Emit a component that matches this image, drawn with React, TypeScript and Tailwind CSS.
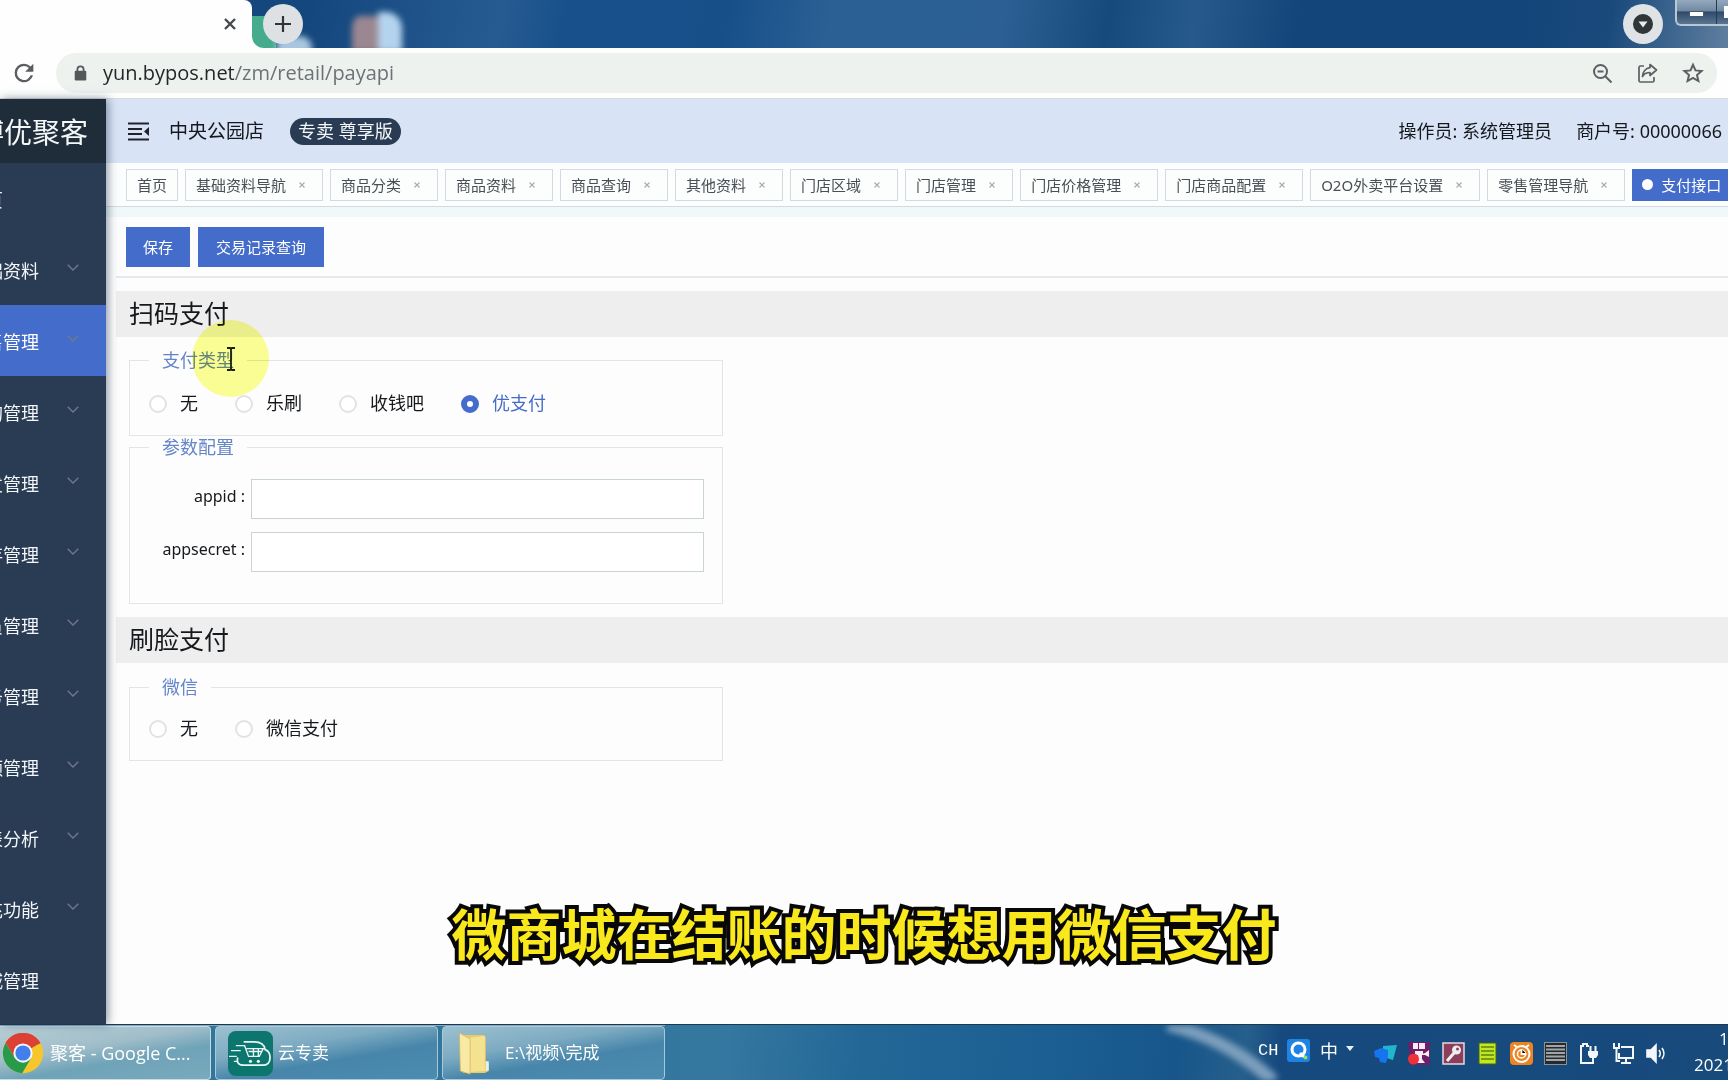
import type { ReactNode } from "react";

const menu = [
  { label: "页", open: false },
  { label: "础资料", open: true },
  { label: "售管理", open: true, active: true },
  { label: "购管理", open: true },
  { label: "发管理", open: true },
  { label: "存管理", open: true },
  { label: "员管理", open: true },
  { label: "务管理", open: true },
  { label: "额管理", open: true },
  { label: "表分析", open: true },
  { label: "充功能", open: true },
  { label: "城管理", open: false },
];

const tabs = [
  "基础资料导航",
  "商品分类",
  "商品资料",
  "商品查询",
  "其他资料",
  "门店区域",
  "门店管理",
  "门店价格管理",
  "门店商品配置",
  "O2O外卖平台设置",
  "零售管理导航",
];

function TabStrip() {
  return (
    <div className="flex h-12 items-start overflow-hidden bg-[linear-gradient(100deg,#14477d_0%,#14477d_18%,#265b91_29%,#17508a_33%,#175089_42%,#2a6094_48%,#2c6094_58%,#164a7c_64%,#27598c_69%,#14457a_75%,#14457a_88%,#1a4a7c_93%,#5f7f9f_100%)]">
      <div className="flex h-12 w-[252px] shrink-0 items-center justify-end rounded-tr-lg bg-[#fdfefd] pr-[14px]">
        <button aria-label="关闭标签页" className="flex size-4 items-center justify-center">
          <svg viewBox="0 0 14 14" className="size-[14px]" fill="none" stroke="#45494c" strokeWidth="2.4">
            <path d="M2 2l10 10M12 2L2 12" />
          </svg>
        </button>
      </div>
      <div className="relative h-12 w-14 shrink-0">
        <div className="absolute top-4 left-0 h-8 w-5 bg-[#fdfefd]" />
        <div className="absolute top-4 left-0 h-8 w-6 rounded-bl-xl bg-[#44ac8c]" />
        <div className="absolute -bottom-3 left-6 h-6 w-9 rounded-full bg-[#a9c6df] blur-[3px]" />
        <button
          aria-label="新标签页"
          className="absolute top-1 left-[11px] flex size-10 items-center justify-center rounded-full bg-[#dde1e3]"
        >
          <svg viewBox="0 0 16 16" className="size-4" fill="none" stroke="#303438" strokeWidth="2.2">
            <path d="M8 0v16M0 8h16" />
          </svg>
        </button>
      </div>
      <div className="mt-3 ml-11 flex h-10 w-[50px] shrink-0 overflow-hidden rounded-t-2xl blur-[3px]">
        <div className="mt-1 flex-1 bg-[#9b8791]" />
        <div className="w-6 bg-[#b4d3ee]" />
      </div>
      <div className="flex-1" />
      <button
        aria-label="搜索标签页"
        className="mt-1 mr-3 flex size-10 shrink-0 items-center justify-center rounded-full bg-[#dfe3e6]"
      >
        <svg viewBox="0 0 20 20" className="size-5">
          <circle cx="10" cy="10" r="10" fill="#303638" />
          <path d="M5.5 7.5h9L10 13.5z" fill="#e8ecee" />
        </svg>
      </button>
      <div className="flex h-[26px] w-[53px] shrink-0 rounded-bl-md border-b-2 border-l-2 border-[#b9c7d4] bg-[linear-gradient(#94a9be_0%,#7089a3_45%,#2e4a69_50%,#5b7692_100%)]">
        <button aria-label="最小化" className="flex w-10 items-center justify-center border-r border-[#243c57]">
          <span className="mt-1 h-[6px] w-[15px] border border-[#4b5a6a] bg-white" />
        </button>
        <button aria-label="最大化" className="flex flex-1 items-center justify-end overflow-hidden">
          <span className="h-3 w-1 bg-white" />
        </button>
      </div>
    </div>
  );
}

function AddressBar() {
  return (
    <div className="flex h-[51px] items-center border-b border-[#d8dadc] bg-[#fdfefd] pr-[11px]">
      <button aria-label="重新加载" className="flex w-14 shrink-0 justify-center pr-2">
        <svg viewBox="0 0 24 24" className="size-7" fill="#5a5e62">
          <path d="M17.65 6.35A7.96 7.96 0 0 0 12 4a8 8 0 1 0 7.73 10h-2.08A6 6 0 1 1 12 6c1.66 0 3.14.69 4.22 1.78L13 11h7V4z" />
        </svg>
      </button>
      <div className="flex h-10 flex-1 items-center rounded-full bg-[#eef2ef] pr-[13px] pl-[18px]">
        <svg viewBox="0 0 14 18" className="mr-4 h-4 w-[13px] shrink-0">
          <path d="M3.5 8V5a3.5 3.5 0 0 1 7 0v3" fill="none" stroke="#54585b" strokeWidth="2" />
          <rect x="0.5" y="6.5" width="13" height="11" rx="1.2" fill="#54585b" />
        </svg>
        <div className="font-['Open_Sans',sans-serif] text-[20px] leading-7 text-[#6d7276]">
          <span className="text-[#23272a]">yun.bypos.net</span>/zm/retail/payapi
        </div>
        <div className="flex-1" />
        <div className="flex items-center gap-6">
          <button aria-label="缩小">
            <svg viewBox="0 0 21 21" className="size-[21px]" fill="none" stroke="#5c6063" strokeWidth="2">
              <circle cx="8.5" cy="8.5" r="6.5" />
              <path d="M13.5 13.5l6 6M5.5 8.5h6" />
            </svg>
          </button>
          <button aria-label="分享">
            <svg viewBox="0 0 21 21" className="size-[21px]" fill="none" stroke="#5c6063" strokeWidth="1.7" strokeLinejoin="round">
              <path d="M7 3H3.5A1.5 1.5 0 0 0 2 4.500v13A1.500 1.500 0 0 0 3.500 19h12a1.500 1.500 0 0 0 1.500-1.500V14" />
              <path d="M13 1.500l6.500 5.500L13 12.500V9.500C9 9.500 7 11 5.500 13.500 5.800 9 8.500 5.200 13 4.600z" />
            </svg>
          </button>
          <button aria-label="收藏">
            <svg viewBox="0 0 22 22" className="size-[22px]" fill="none" stroke="#5c6063" strokeWidth="2">
              <path d="M11 2.800l2.500 5.600 6.100.6-4.600 4 1.400 6L11 15.800 5.600 19 7 13 2.400 9l6.100-.6z" />
            </svg>
          </button>
        </div>
      </div>
    </div>
  );
}

function Sidebar() {
  return (
    <aside className="relative z-10 w-[106px] shrink-0 bg-[#2a3b54] shadow-[2px_0_9px_rgba(30,50,80,0.5)]">
      <div className="flex h-16 w-full justify-end overflow-hidden bg-[#1f2d3a] pr-[18px] text-[28px] leading-[66px] whitespace-nowrap text-[#f3f7f8]">
        博优聚客
      </div>
      <nav>
        {menu.map((m) => (
          <a
            key={m.label}
            href="#"
            className={
              m.active
                ? "flex h-[71px] items-center bg-[#446ccb] text-white"
                : "flex h-[71px] items-center text-[#f2f6f8]"
            }
          >
            <span
              className={
                m.label.length === 1
                  ? "flex w-[3px] justify-end overflow-hidden pt-[2px] text-[18px] leading-6"
                  : "flex w-[39px] justify-end overflow-hidden pt-[2px] text-[18px] leading-6 whitespace-nowrap"
              }
            >
              {m.label}
            </span>
            {m.open && (
              <svg viewBox="0 0 12 7" className="mb-1 ml-7 h-[7px] w-3" fill="none" stroke="#6e7889" strokeWidth="1.4">
                <path d="M.7.700l5.300 5.200 5.300-5.200" />
              </svg>
            )}
          </a>
        ))}
      </nav>
    </aside>
  );
}

function Header() {
  return (
    <header className="flex h-16 items-center bg-[#d8e4f6] pr-[6px] pl-[22px] text-[18px] leading-6 whitespace-nowrap text-[#15181c]">
      <button aria-label="收起菜单">
        <svg viewBox="0 0 21 19" className="h-[19px] w-[21px]" fill="none" stroke="#20242a" strokeWidth="2">
          <path d="M0 1.500h21M0 7h14M0 12h14M0 17.500h21" />
          <path d="M21 5v9l-5-4.500z" fill="#20242a" stroke="none" />
        </svg>
      </button>
      <span className="ml-5 text-[19px]">中央公园店</span>
      <span className="ml-[26px] rounded-full bg-[#2a3b54] px-2 py-px text-[18px] leading-[25px] text-[#f5f8fa]">
        专卖 尊享版
      </span>
      <span className="flex-1" />
      <span>操作员: 系统管理员</span>
      <span className="ml-6">商户号: 00000066</span>
    </header>
  );
}

function PageTabs() {
  return (
    <div className="flex h-11 items-center gap-[7px] overflow-hidden border-b border-[#d5dae0] bg-[#fcfefd] pl-5 text-[15px] leading-5 whitespace-nowrap text-[#4a4e55]">
      <a href="#" className="flex h-8 shrink-0 items-center border border-[#d4dae0] px-[10px]">
        首页
      </a>
      {tabs.map((t) => (
        <div key={t} className="flex h-8 shrink-0 items-center border border-[#d4dae0] pl-[10px]">
          <a href="#">{t}</a>
          <button aria-label={`关闭${t}`} className="flex w-9 items-center justify-center pr-1">
            <svg viewBox="0 0 6 6" className="size-[6px]" fill="none" stroke="#a6abb0" strokeWidth="1.100">
              <path d="M.5.500l5 5M5.500.500l-5 5" />
            </svg>
          </button>
        </div>
      ))}
      <a href="#" className="flex h-8 shrink-0 items-center gap-2 bg-[#446ccb] px-[10px] text-white">
        <span className="size-[11px] rounded-full bg-white" />
        支付接口
      </a>
    </div>
  );
}

function Radio({ name, label, checked }: { name: string; label: string; checked?: boolean }) {
  return (
    <label className={checked ? "flex items-center gap-[13px] text-[#446ccb]" : "flex items-center gap-[13px]"}>
      <input
        type="radio"
        name={name}
        defaultChecked={checked}
        className="size-[18px] appearance-none rounded-full border-2 border-[#e0e3e5] bg-white checked:border-[6px] checked:border-[#446ccb]"
      />
      {label}
    </label>
  );
}

function Group({ title, children }: { title: string; children: ReactNode }) {
  return (
    <fieldset className="ml-[13px] w-[594px] max-w-full border border-[#e2e5e7] pl-[19px]">
      <legend className="px-[13px] text-[18px] leading-6 text-[#6485c8]">{title}</legend>
      {children}
    </fieldset>
  );
}

function SectionTitle({ children }: { children: ReactNode }) {
  return (
    <h2 className="h-[46px] bg-[#eeeeee] pl-[13px] text-[25px] leading-[44px] text-[#15181c]">{children}</h2>
  );
}

function Field({ id, label }: { id: string; label: string }) {
  return (
    <div className="flex h-10 items-center">
      <label htmlFor={id} className="w-[96px] pb-[6px] text-right text-[16px] leading-5 whitespace-nowrap">
        {label} :
      </label>
      <input id={id} type="text" className="ml-[6px] h-10 w-[453px] border border-[#c8d3d6] bg-white px-3 text-base" />
    </div>
  );
}

function Main() {
  return (
    <main className="flex-1 bg-[#fdfdfd] pl-[10px] text-[18px] text-[#15181c]">
      <div className="-ml-[10px] h-[10px] bg-[#f0f8f9]" />
      <div className="flex h-[61px] items-center gap-2 border-b-2 border-[#e6e9eb] pl-[10px] text-[15px] leading-5 text-white">
        <button className="h-10 bg-[#446ccb] px-[17px]">保存</button>
        <button className="h-10 bg-[#446ccb] px-[18px]">交易记录查询</button>
      </div>
      <section className="pt-[13px]">
        <SectionTitle>扫码支付</SectionTitle>
        <div className="pt-[11px]">
          <Group title="支付类型">
            <div className="flex h-[63px] items-center gap-[37px]">
              <Radio name="scan" label="无" />
              <Radio name="scan" label="乐刷" />
              <Radio name="scan" label="收钱吧" />
              <Radio name="scan" label="优支付" checked />
            </div>
          </Group>
          <div className="-mt-px">
            <Group title="参数配置">
              <div className="flex h-[144px] flex-col gap-[13px] pt-5">
                <Field id="appid" label="appid" />
                <Field id="appsecret" label="appsecret" />
              </div>
            </Group>
          </div>
        </div>
      </section>
      <section className="pt-[13px]">
        <SectionTitle>刷脸支付</SectionTitle>
        <div className="pt-3">
          <Group title="微信">
            <div className="flex h-[61px] items-center gap-[37px] pb-[2px]">
              <Radio name="face" label="无" />
              <Radio name="face" label="微信支付" />
            </div>
          </Group>
        </div>
      </section>
    </main>
  );
}

function TaskButton({ first, children }: { first?: boolean; children: ReactNode }) {
  return (
    <button
      className={
        first
          ? "flex h-full w-[211px] items-center overflow-hidden rounded-r-sm border border-l-0 border-[#c5dbe6] bg-[linear-gradient(170deg,#b9cfd6_0%,#9fbdc9_40%,#6fa3b8_62%,#79aabd_100%)] pl-[2px] text-[18px]"
          : "flex h-full w-[223px] items-center overflow-hidden rounded-sm border border-[#a9c9da] bg-[linear-gradient(170deg,#9cc0d0_0%,#7eabc2_35%,#4786aa_60%,#4b8cb0_100%)] text-[17px]"
      }
    >
      {children}
    </button>
  );
}

function Tray() {
  return (
    <div className="flex items-center text-white">
      <span className="mb-1 w-[29px] font-['Liberation_Mono',monospace] text-[17px] leading-5">CH</span>
      <svg viewBox="0 0 23 23" className="mb-1 size-[23px]">
        <rect width="23" height="23" rx="3" fill="#1f83e6" />
        <circle cx="11.500" cy="10.500" r="6.500" fill="none" stroke="#fff" strokeWidth="3" />
        <path d="M13 14l4 4" stroke="#fff" strokeWidth="3" />
        <circle cx="18.500" cy="18.500" r="2" fill="#8ee05a" />
      </svg>
      <span className="mb-1 ml-[10px] text-[18px] leading-6">中</span>
      <svg viewBox="0 0 8 5" className="mb-2 ml-2 h-[5px] w-2">
        <path d="M0 0h8L4 5z" fill="#e5f3f7" />
      </svg>
      <div className="ml-5 flex items-center gap-[11px] pt-[2px]">
        <svg viewBox="0 0 23 23" className="size-[23px]">
          <path d="M9 4l14-1-4 15-10-3z" fill="#22b5d0" />
          <path d="M0 9l7-3 7 2v6l-2 7-6-1-1-4-4-1z" fill="#1674ee" />
        </svg>
        <svg viewBox="0 0 23 23" className="size-[23px]">
          <path d="M0 0h22v23H2z" fill="#6b2068" />
          <path d="M5 1h5v6H5zM11 1h6v6h-6zM7 9h8v4H7zM14 12l3-1 4-3v7l-4-2h-3zM10 13h4v4l3 4H9z" fill="#fbe9f4" />
          <circle cx="5.500" cy="17" r="5.500" fill="#ee3038" />
        </svg>
        <svg viewBox="0 0 23 23" className="size-[23px]">
          <rect x="1" y="1" width="21" height="21" fill="#8c3f5c" stroke="#ead8df" strokeWidth="1.500" />
          <path d="M12 11l-7 8" stroke="#eee" strokeWidth="3" />
          <circle cx="14.500" cy="8" r="4.500" fill="#eee" />
          <circle cx="15.500" cy="7" r="1.500" fill="#8c3f5c" />
        </svg>
        <svg viewBox="0 0 23 23" className="size-[23px]">
          <rect x="3" y="1" width="17" height="21" fill="#c4e61d" stroke="#46611a" />
          <path d="M5 5h13M5 9h13M5 13h13M5 17h13" stroke="#55841c" strokeWidth="1.500" />
        </svg>
        <svg viewBox="0 0 23 23" className="size-[23px]">
          <rect width="23" height="23" rx="4" fill="#ee8420" />
          <circle cx="11.500" cy="12" r="8" fill="none" stroke="#fff" strokeWidth="2" />
          <circle cx="11.500" cy="12" r="4" fill="none" stroke="#fff" strokeWidth="1.500" />
          <path d="M11.500 7v5h5M4 3l3 2M19 3l-3 2" stroke="#fff" strokeWidth="1.800" />
        </svg>
        <svg viewBox="0 0 23 23" className="size-[23px]">
          <rect x=".5" y=".5" width="22" height="22" fill="#262a2e" stroke="#87929b" />
          <path d="M2 4h19M2 7.500h19M2 11h19M2 14.500h19M2 18h19" stroke="#a0a5a8" strokeWidth="1.800" />
        </svg>
        <svg viewBox="0 0 23 23" className="size-[23px]" fill="none" stroke="#f4f7f9" strokeWidth="2">
          <path d="M11 4H9V2H5v2H3v17h8" />
          <path d="M10 9h10v4l-2 3h-6l-2-3z" fill="#f4f7f9" stroke="none" />
          <path d="M12.500 4v5M17.500 4v5M15 16v5h-4" />
        </svg>
        <svg viewBox="0 0 23 23" className="size-[23px]" fill="none" stroke="#f4f7f9" strokeWidth="2">
          <path d="M9 5h12v11H7v-5M14 16v4M9 21h10" />
          <path d="M2 1v5h5V1M4.500 6v13H8" />
        </svg>
        <svg viewBox="0 0 23 23" className="size-[23px]" fill="none" stroke="#f4f7f9" strokeWidth="1.600">
          <path d="M1 8h4l5-5v17l-5-5H1z" fill="#f4f7f9" />
          <path d="M13 8q2.500 3.500 0 7M16 6q4 5.500 0 11" />
        </svg>
      </div>
      <div className="ml-[25px] flex h-[54px] w-[34px] flex-col overflow-hidden font-['Open_Sans',sans-serif] text-[17px] leading-[26px] whitespace-nowrap">
        <span className="pl-[25px]">1</span>
        <span>2021</span>
      </div>
    </div>
  );
}

function Taskbar() {
  return (
    <footer className="relative flex h-14 items-center justify-between overflow-hidden border-t border-[#1d3950] bg-[linear-gradient(95deg,#2f7599_0%,#34779f_42%,#236797_50%,#1c6093_60%,#17568a_68%,#265f8c_72%,#164a7e_74%,#184a7c_100%)] whitespace-nowrap">
      <svg viewBox="0 0 120 56" className="absolute top-0 left-[67%] h-14 w-[150px] blur-[3px]" preserveAspectRatio="none">
        <path d="M8 0q48 14 84 56" stroke="#7d9fbd" strokeWidth="12" fill="none" />
      </svg>
      <div className="relative flex h-full gap-1 border-t border-[#87a9bf] font-['Open_Sans','Noto_Sans_CJK_SC',sans-serif] leading-6 text-white">
        <TaskButton first>
          <svg viewBox="0 0 48 48" className="mr-[6px] size-[42px] shrink-0">
            <circle cx="24" cy="24" r="23" fill="#f5c72c" />
            <path d="M24 24L4.100 12.500A23 23 0 0 1 43.900 12.500z" fill="#dc4136" />
            <path d="M24 13h19.900A23 23 0 0 0 4.100 12.500l10.400 17z" fill="#dc4136" />
            <path d="M4.100 12.500A23 23 0 0 0 23 47l10.500-17.500-19 0z" fill="#289b4b" />
            <circle cx="24" cy="24" r="11" fill="#f4f7f8" />
            <circle cx="24" cy="24" r="8.700" fill="#4180ec" />
          </svg>
          聚客 - Google C...
        </TaskButton>
        <TaskButton>
          <svg viewBox="0 0 46 46" className="mr-[5px] ml-3 size-[45px] shrink-0" fill="none" stroke="#e6f7f4" strokeWidth="1.800">
            <rect width="46" height="46" rx="8" fill="#0c766e" stroke="none" />
            <path d="M10 27q-2 8 6 8h19q8 0 8-8 0-6-5-8-1-8-12-8H16" />
            <path d="M8 15h9l4 11h11l4-8H19M21 21h13M26 18v8M31 18v8M3 20h10M1 26h8M6 31h4" strokeWidth="1.400" />
            <circle cx="23" cy="31" r="1.600" fill="#e6f7f4" stroke="none" />
            <circle cx="31" cy="31" r="1.600" fill="#e6f7f4" stroke="none" />
          </svg>
          云专卖
        </TaskButton>
        <TaskButton>
          <svg viewBox="0 0 36 46" className="mr-3 ml-[14px] h-[45px] w-9 shrink-0">
            <path d="M4 4h22q3 0 3 3v24l3 2v8l-4 2H6z" fill="#eacb69" />
            <path d="M12 7l16-2v36l-16 1z" fill="#f5e290" />
            <path d="M2 2l11 6v36L3 41z" fill="#f8e9a6" stroke="#d5b552" strokeWidth=".8" />
            <path d="M29 31h3v9l-3 1z" fill="#dff1f5" />
          </svg>
          E:\视频\完成
        </TaskButton>
      </div>
      <div className="relative">
        <Tray />
      </div>
    </footer>
  );
}

export default function App() {
  return (
    <div className="relative flex min-h-screen flex-col overflow-hidden bg-[#fdfdfd] font-['Noto_Sans','Noto_Sans_CJK_SC',sans-serif]">
      <TabStrip />
      <AddressBar />
      <div className="flex flex-1">
        <Sidebar />
        <div className="flex min-w-0 flex-1 flex-col">
          <Header />
          <PageTabs />
          <Main />
        </div>
      </div>
      <Taskbar />

      <div className="pointer-events-none absolute top-[320px] left-[192px] z-20 size-[77px] rounded-full bg-[#fbff94] mix-blend-multiply" />
      <svg viewBox="0 0 10 24" className="pointer-events-none absolute top-[347px] left-[226px] z-20 h-6 w-[10px]" fill="none" stroke="#1c1f10" strokeWidth="1.800">
        <path d="M1 1h3l1 1 1-1h3M5 2v20M1 23h3l1-1 1 1h3" />
      </svg>
      <p className="pointer-events-none absolute inset-x-0 bottom-[109px] z-20 text-center font-['Noto_Sans_CJK_SC',sans-serif] text-[55px] leading-[80px] font-bold whitespace-nowrap text-[#f9e81c] [-webkit-text-stroke:8px_#080808] [paint-order:stroke_fill]">
        微商城在结账的时候想用微信支付
      </p>
    </div>
  );
}
